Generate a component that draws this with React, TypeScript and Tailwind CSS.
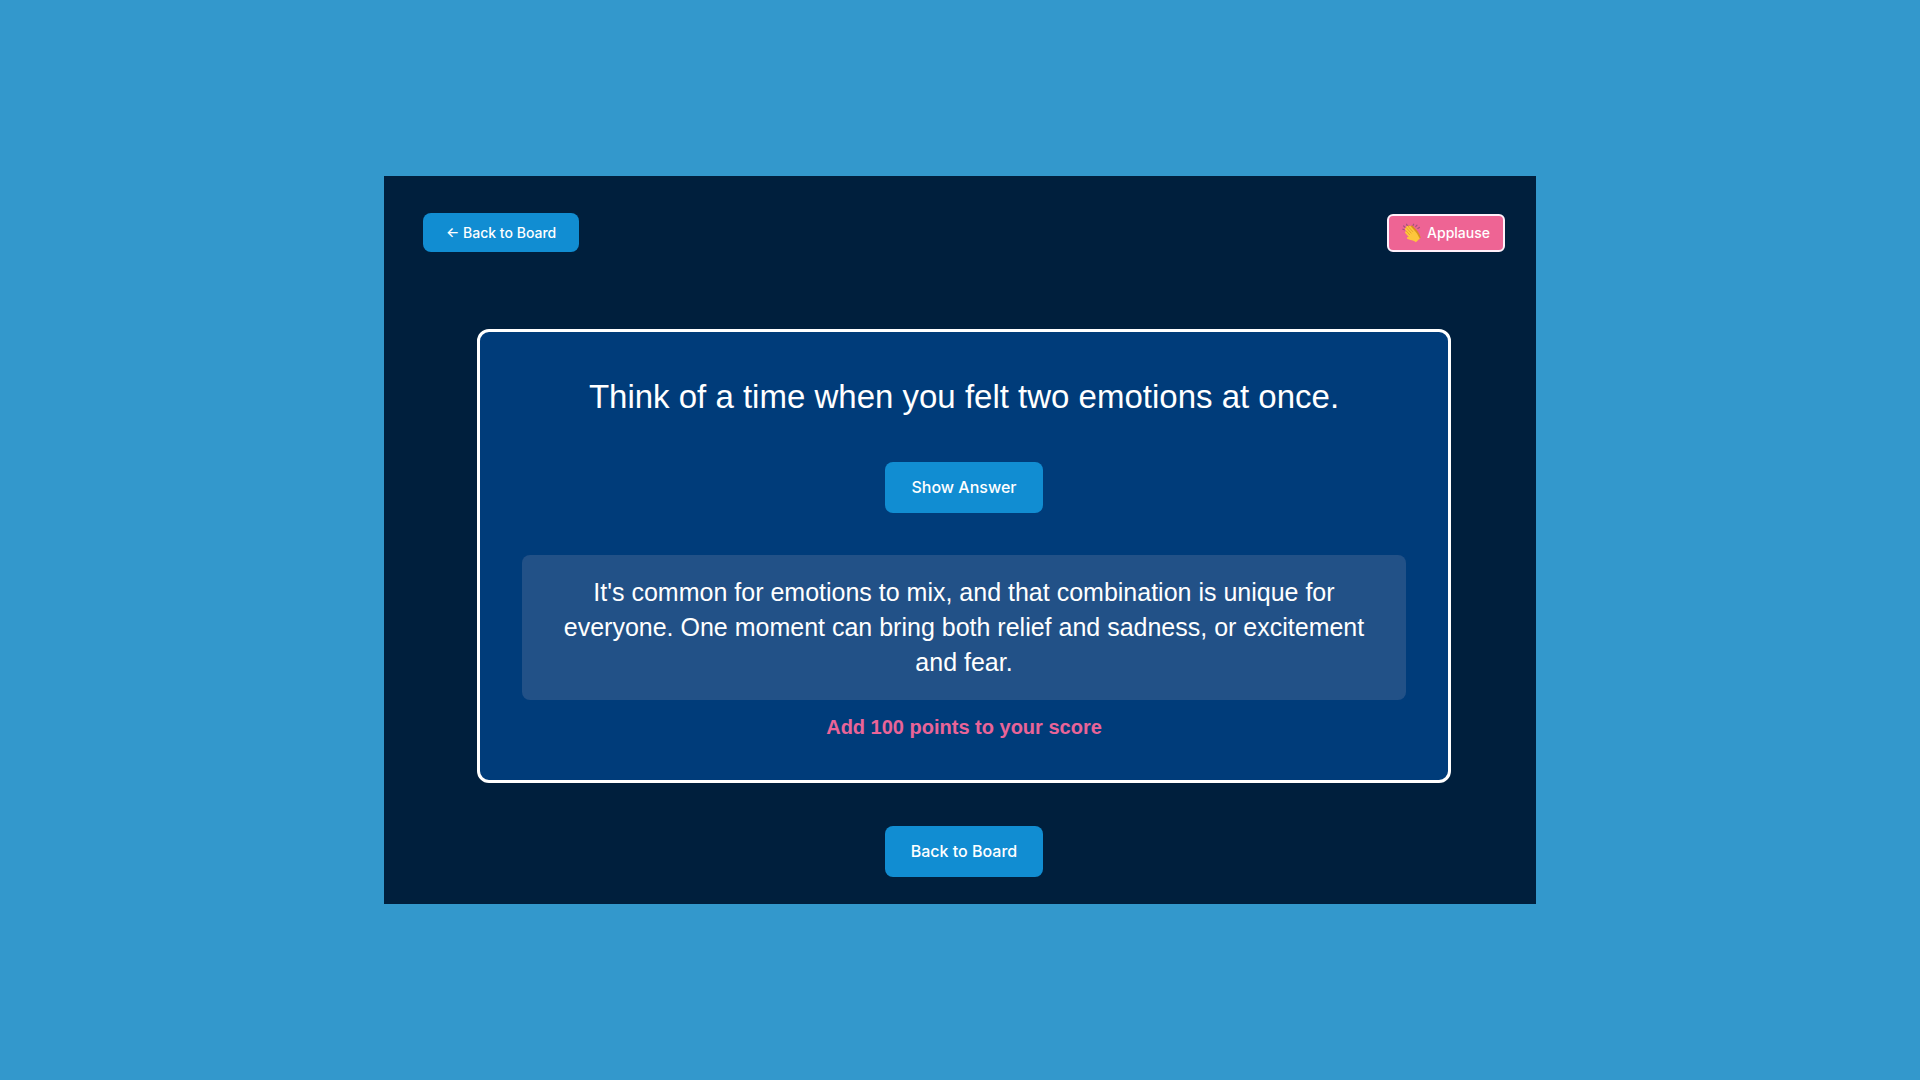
function ClapIcon() {
  return (
    <svg viewBox="0 0 20 20" className="size-5 shrink-0" aria-hidden="true">
      <g fill="none" stroke="#a3527c" strokeWidth="1.2" strokeLinecap="round">
        <path d="M.9 6.2 2.3 6.8" />
        <path d="M1.6 3 3 4.2" />
        <path d="M4.6 1.2 5.3 2.8" />
        <path d="M10.8 2.8 11.7 1.2" />
        <path d="M13.7 3.6 15 2.2" />
        <path d="M15.8 5.4 17.4 4.4" />
      </g>
      <g transform="rotate(-42 10 10)">
        <path
          d="M8.6 3.2a1.2 1.2 0 0 1 2.4-.4 1.2 1.2 0 0 1 2.3.6v1a1.2 1.2 0 0 1 2 .9v6.5c0 3-1 5-1.800 7.400H9.600Z"
          fill="#d9901f"
        />
        <path
          d="M5 5.400a1.100 1.100 0 0 1 2.100-.3V3a1.100 1.100 0 0 1 2.200 0v-.6a1.100 1.100 0 0 1 2.200 0V4a1.050 1.050 0 0 1 2.100 0v7.400c0 3.200-1.100 5.200-1.500 8H6.700c-.3-2-1.200-3.600-2.500-5.200l-1.500-2.700c-.5-1.100.9-2 1.700-1l.6.7Z"
          fill="#fdc63c"
        />
        <path
          d="M7.1 5v4.6M9.3 3.2v6.2M11.5 4v5.4"
          fill="none"
          stroke="#dd9624"
          strokeWidth=".7"
          strokeLinecap="round"
        />
      </g>
    </svg>
  );
}

export default function App() {
  return (
    <div className="flex min-h-screen items-center justify-center bg-[#3398cc] font-['Liberation_Sans',Arial,sans-serif] text-white">
      <main className="flex w-3/5 flex-col bg-[#001f3d] pt-[37px] pr-[31px] pb-[27px] pl-[39px]">
        <header className="flex items-center justify-between font-[Inter,sans-serif] text-sm leading-[19px] font-medium">
          <button type="button" className="rounded-lg bg-[#118dd2] px-[23px] py-[10px]">
            ← Back to Board
          </button>
          <button
            type="button"
            className="flex items-center gap-[5px] rounded-md border-2 border-[#fff0fa] bg-[#ee6494] px-[13px] py-[7px]"
          >
            <ClapIcon />
            Applause
          </button>
        </header>

        <section className="mx-auto mt-[77px] flex w-9/10 flex-col items-center rounded-xl border-3 border-white bg-[#003c7a] px-[42px] pt-[42px] pb-[39px] text-center">
          <h1 className="text-[33px] leading-[46px]">
            Think of a time when you felt two emotions at once.
          </h1>
          <button
            type="button"
            className="mt-[42px] rounded-lg bg-[#118dd2] px-[26px] py-[13px] font-[Inter,sans-serif] text-base leading-[25px] font-medium"
          >
            Show Answer
          </button>
          <p className="mt-[42px] w-full rounded-lg bg-[#225187] px-[26px] py-5 text-[25px] leading-[35px]">
            It's common for emotions to mix, and that combination is unique for everyone. One moment can bring both
            relief and sadness, or excitement and fear.
          </p>
          <p className="mt-[13px] text-xl leading-7 font-bold text-[#ea6498]">Add 100 points to your score</p>
        </section>

        <button
          type="button"
          className="mx-auto mt-[43px] rounded-lg bg-[#118dd2] px-[26px] py-[13px] font-[Inter,sans-serif] text-base leading-[25px] font-medium"
        >
          Back to Board
        </button>
      </main>
    </div>
  );
}
